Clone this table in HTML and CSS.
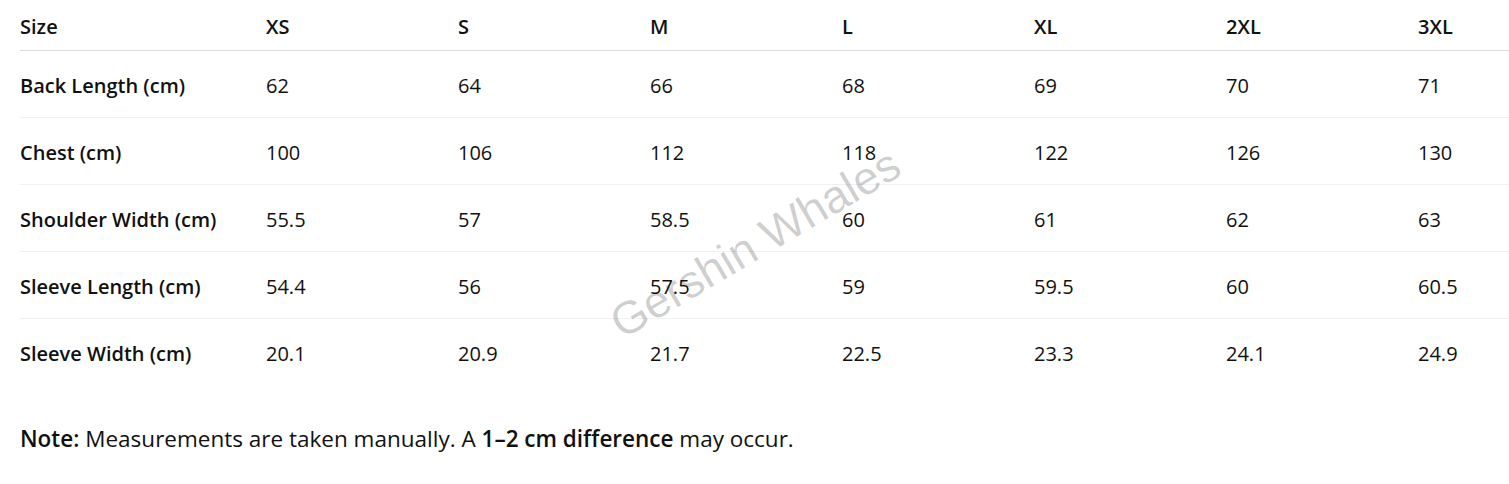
FILE: index.html
```html
<!DOCTYPE html>
<html lang="en">
<head>
<meta charset="utf-8">
<title>Size Chart</title>
<link rel="stylesheet" href="styles.css">
</head>
<body>
<div class="page">
  <div class="table-wrap">
    <table class="size-table">
      <thead>
        <tr>
          <th class="label-col">Size</th>
          <th>XS</th><th>S</th><th>M</th><th>L</th><th>XL</th><th>2XL</th><th>3XL</th>
        </tr>
      </thead>
      <tbody>
        <tr><th class="label-col">Back Length (cm)</th><td>62</td><td>64</td><td>66</td><td>68</td><td>69</td><td>70</td><td>71</td></tr>
        <tr><th class="label-col">Chest (cm)</th><td>100</td><td>106</td><td>112</td><td>118</td><td>122</td><td>126</td><td>130</td></tr>
        <tr><th class="label-col">Shoulder Width (cm)</th><td>55.5</td><td>57</td><td>58.5</td><td>60</td><td>61</td><td>62</td><td>63</td></tr>
        <tr><th class="label-col">Sleeve Length (cm)</th><td>54.4</td><td>56</td><td>57.5</td><td>59</td><td>59.5</td><td>60</td><td>60.5</td></tr>
        <tr><th class="label-col">Sleeve Width (cm)</th><td>20.1</td><td>20.9</td><td>21.7</td><td>22.5</td><td>23.3</td><td>24.1</td><td>24.9</td></tr>
      </tbody>
    </table>
    <div class="watermark">Gershin Whales</div>
  </div>
  <p class="note"><strong>Note:</strong> Measurements are taken manually. A <strong>1–2 cm difference</strong> may occur.</p>
</div>
</body>
</html>
```

FILE: styles.css
```css
html, body {
  margin: 0;
  padding: 0;
  background: #ffffff;
}

body {
  font-family: "Open Sans", "Noto Sans", sans-serif;
  color: #111111;
  overflow: hidden;
}

.page {
  padding-left: 20px;
}

.table-wrap {
  position: relative;
}

.size-table {
  border-collapse: collapse;
  table-layout: fixed;
  width: 1590px;
  font-size: 20px;
  line-height: 24px;
}

.size-table th,
.size-table td {
  width: 192px;
  text-align: left;
  padding: 23px 0 19px 0;
  vertical-align: top;
  white-space: nowrap;
}

.size-table th {
  font-weight: 600;
}

.size-table td {
  font-weight: 400;
}

.size-table .label-col {
  width: 246px;
}

.size-table thead th {
  padding: 15px 0 11px 0;
  border-bottom: 1px solid #dcdcdc;
}

.size-table tbody tr {
  border-bottom: 1px solid #f1f1f1;
}

.size-table tbody tr:last-child {
  border-bottom: none;
}

.watermark {
  position: absolute;
  left: 735px;
  top: 243px;
  transform: translate(-50%, -50%) rotate(-30.5deg);
  font-family: "Liberation Sans", Arial, sans-serif;
  font-size: 46px;
  color: rgba(0, 0, 0, 0.19);
  white-space: nowrap;
  pointer-events: none;
}

.note {
  margin: 39px 0 0 0;
  font-size: 22.5px;
  line-height: 30px;
}

.note strong {
  font-weight: 600;
}
```
